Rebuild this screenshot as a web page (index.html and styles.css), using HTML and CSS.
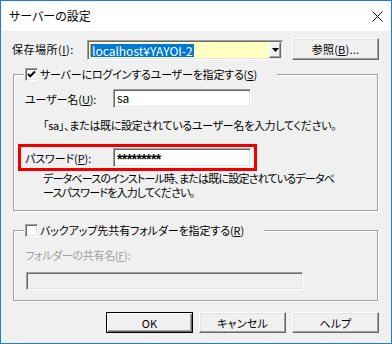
FILE: index.html
```html
<!DOCTYPE html>
<html lang="ja">
<head>
    <meta charset="UTF-8">
    <title>サーバーの設定</title>
    <link rel="stylesheet" href="styles.css">
</head>
<body>

    <div class="window">
        <div class="titlebar">
            <span class="title">サーバーの設定</span>
            <svg class="close" width="11" height="11" viewBox="0 0 11 11">
                <path d="M0.5 0.5L10.5 10.5M10.5 0.5L0.5 10.5" stroke="#000" stroke-width="1" fill="none"/>
            </svg>
        </div>

        <div class="content">
            <div class="row-top">
                <span class="lbl-loc">保存場所(<u>I</u>):</span>
                <div class="combo">
                    <span class="sel">localhost¥YAYOI-2</span>
                    <span class="drop">
                        <svg width="7" height="4" viewBox="0 0 7 4"><path d="M0 0H7L3.5 4Z" fill="#000"/></svg>
                    </span>
                </div>
                <button class="btn btn-browse">参照(<u>B</u>)...</button>
            </div>

            <fieldset class="group group-login">
                <legend class="legend">
                    <span class="check">
                        <svg width="11" height="11" viewBox="0 0 11 11"><path d="M2 5L4.2 7.3L9 2.5" stroke="#000" stroke-width="2" fill="none"/></svg>
                    </span><span class="legend-text">サーバーにログインするユーザーを指定する(<u>S</u>)</span>
                </legend>

                <div class="field-row">
                    <span class="lbl">ユーザー名(<u>U</u>):</span>
                    <div class="edit">sa</div>
                </div>
                <p class="hint">「sa」、または既に設定されているユーザー名を入力してください。</p>

                <div class="field-row marked">
                    <span class="lbl lbl-pw">パスワード(<u>P</u>):</span>
                    <div class="edit pw">*********</div>
                </div>
                <p class="hint hint-pw">データベースのインストール時、または既に設定されているデータベ<br>ースパスワードを入力してください。</p>
            </fieldset>

            <fieldset class="group group-backup">
                <legend class="legend">
                    <span class="check"></span><span class="legend-text">バックアップ先共有フォルダーを指定する(<u>R</u>)</span>
                </legend>
                <p class="lbl-off">フォルダーの共有名(<u>F</u>):</p>
                <div class="edit edit-off"></div>
            </fieldset>

            <div class="actions">
                <button class="btn btn-default">OK</button>
                <button class="btn">キャンセル</button>
                <button class="btn">ヘルプ</button>
            </div>
        </div>
    </div>

</body>
</html>
```

FILE: styles.css
```css
* {
    box-sizing: border-box;
}

body {
    margin: 0;
    font-family: "Noto Sans CJK JP", sans-serif;
    font-size: 11px;
    line-height: 14px;
    font-feature-settings: "palt";
    color: #000;
}

.window {
    width: 392px;
    height: 344px;
    border: 1px solid #1883d7;
    background: #f0f0f0;
}

.titlebar {
    height: 30px;
    background: #fff;
    display: flex;
    align-items: center;
    justify-content: space-between;
    padding: 0 8px 0 8px;
    font-size: 12px;
}

.content {
    padding-top: 7px;
}

.row-top {
    display: flex;
    align-items: flex-end;
    height: 22px;
    padding-left: 11px;
}

.lbl-loc {
    width: 75px;
    align-self: center;
    white-space: nowrap;
    letter-spacing: 0.5px;
}

.combo {
    width: 196px;
    height: 20px;
    display: flex;
    align-items: center;
    padding: 0 0 0 1px;
    background: #ffffc4;
    border: 1px solid;
    border-color: #a0a0a0 #fff #fff #a0a0a0;
    box-shadow: inset 1px 1px #696969, inset -1px -1px #e3e3e3;
}

.sel {
    margin-left: 1px;
    padding: 0 1px;
    font-size: 12px;
    line-height: 13px;
    background: #0078d7;
    color: #fff;
    border-left: 1px solid #f0a030;
}

.drop {
    margin: 0 1px 0 auto;
    width: 12px;
    height: 16px;
    display: flex;
    align-items: center;
    justify-content: center;
    background: #f0f0f0;
    border: 1px solid;
    border-color: #fff #696969 #696969 #fff;
    box-shadow: inset -1px -1px #a0a0a0;
}

.btn {
    width: 87px;
    height: 21px;
    padding: 0;
    font: inherit;
    font-feature-settings: "palt";
    letter-spacing: 0.2px;
    color: #000;
    background: #f0f0f0;
    border: 1px solid;
    border-color: #fff #696969 #696969 #fff;
    box-shadow: inset -1px -1px #a0a0a0, inset 1px 1px #e3e3e3;
}

.btn-browse {
    height: 22px;
    margin-left: 9px;
}

.btn-default {
    border-color: #000;
    box-shadow: inset 1px 1px #fff, inset -1px -1px #696969, inset -2px -2px #a0a0a0;
}

.group {
    width: 365px;
    margin: 7px 0 0 12px;
    padding: 8px 0 11px 11px;
    min-width: 0;
    border: 1px solid #a0a0a0;
    box-shadow: inset 1px 1px #fff, 1px 1px #fff;
}

.legend {
    margin-left: -1px;
    padding: 0 20px 0 1px;
    height: 14px;
    background: #f0f0f0;
    white-space: nowrap;
}

.group-login .legend-text {
    letter-spacing: -0.2px;
}

.group-backup .legend-text {
    letter-spacing: -0.1px;
}

.check {
    display: inline-block;
    vertical-align: top;
    width: 13px;
    height: 13px;
    margin-top: 1px;
    margin-right: 2px;
    padding: 0;
    background: #fff;
    border: 1px solid;
    border-color: #a0a0a0 #fff #fff #a0a0a0;
    box-shadow: inset 1px 1px #696969, inset -1px -1px #e3e3e3;
}

.check svg {
    display: block;
}

.legend-text {
    vertical-align: top;
}

.field-row {
    display: flex;
    align-items: center;
    height: 19px;
}

.lbl {
    width: 88px;
    white-space: nowrap;
    letter-spacing: -0.1px;
}

.lbl-pw {
    letter-spacing: -0.1px;
}

.edit {
    width: 138px;
    height: 19px;
    padding: 0 3px;
    font-size: 12px;
    line-height: 16px;
    background: #fff;
    border: 1px solid;
    border-color: #a0a0a0 #fff #fff #a0a0a0;
    box-shadow: inset 1px 1px #696969, inset -1px -1px #e3e3e3;
}

.pw {
    font-family: "Liberation Sans", sans-serif;
    font-size: 14px;
    font-weight: bold;
    letter-spacing: -0.6px;
    line-height: 21px;
}

.hint {
    margin: 10px 0 0 18px;
    white-space: nowrap;
    letter-spacing: -0.3px;
}

.marked {
    width: 239px;
    height: 27px;
    margin: 12px 0 0 -7px;
    padding: 1px 0 1px 4px;
    border: 3px solid #ee0000;
}

.hint-pw {
    margin-top: 0;
    letter-spacing: -0.8px;
}

.group-backup {
    margin-top: 12px;
    padding: 11px 0 10px 11px;
}

.lbl-off {
    margin: 0;
    color: #a0a0a0;
    letter-spacing: -0.3px;
}

.edit-off {
    width: 277px;
    height: 18px;
    margin: 10px 0 0 1px;
    background: #f0f0f0;
}

.actions {
    display: flex;
    justify-content: flex-end;
    gap: 6px;
    margin-top: 11px;
    padding-right: 12px;
}

.actions .btn {
    width: 87px;
    height: 21px;
}
```
